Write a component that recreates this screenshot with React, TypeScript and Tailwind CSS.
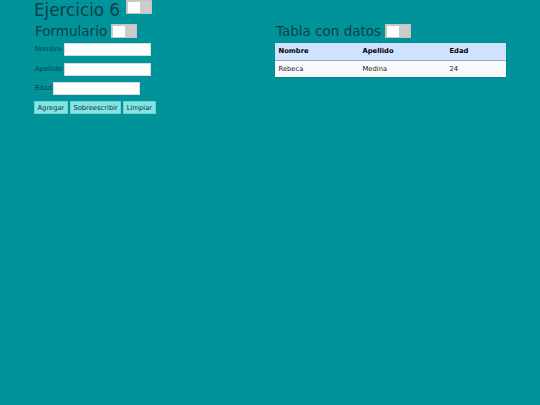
import React from "react";

function Toggle() {
  return (
    <div className="w-[26px] h-[14px] bg-[#cccccc] border border-[#c4c4c4] flex items-center pl-[1px] shrink-0">
      <div className="w-[12px] h-[11px] bg-white" />
    </div>
  );
}

export default function App() {
  const font = { fontFamily: '"DejaVu Sans", Verdana, sans-serif' };
  return (
    <div className="w-[540px] h-[405px] bg-[#01939a] text-[#0c3f48] overflow-hidden" style={font}>
      <div className="pl-[34px]">
        <div className="flex items-start h-[20px]">
          <h1 className="text-[16.75px] leading-[20px] font-normal m-0">Ejercicio 6</h1>
          <div className="ml-[6px]">
            <Toggle />
          </div>
        </div>
        <div className="flex mt-[4px]">
          <div className="w-[241px] flex flex-col">
            <div className="flex items-center h-[14px]">
              <h3 className="text-[13.5px] leading-[14px] font-normal pl-[1px]">Formulario</h3>
              <div className="ml-[4px]">
                <Toggle />
              </div>
            </div>
            <div className="flex items-center mt-[5px] h-[12.5px]">
              <label className="text-[6.75px] leading-[8px] pl-[1px]">Nombre</label>
              <input className="ml-[2px] w-[87px] h-[12.5px] bg-white border border-[#d8d8d8] outline-none" />
            </div>
            <div className="flex items-center mt-[7.5px] h-[12.5px]">
              <label className="text-[6.75px] leading-[8px] pl-[1px]">Apellido</label>
              <input className="ml-[2px] w-[87px] h-[12.5px] bg-white border border-[#d8d8d8] outline-none" />
            </div>
            <div className="flex items-center mt-[6.5px] h-[12.5px]">
              <label className="text-[6.75px] leading-[8px] pl-[1px]">Edad</label>
              <input className="ml-[1px] w-[87px] h-[12.5px] bg-white border border-[#d8d8d8] outline-none" />
            </div>
            <div className="flex items-center mt-[6.5px] gap-[2px]">
              <button className="h-[13px] px-[2.5px] bg-[#84e3e5] border border-[#6fd0d2] text-[6.75px] leading-[8px] text-[#0a3238]">Agregar</button>
              <button className="h-[13px] px-[2.5px] bg-[#84e3e5] border border-[#6fd0d2] text-[6.75px] leading-[8px] text-[#0a3238]">Sobreescribir</button>
              <button className="h-[13px] px-[2.5px] bg-[#84e3e5] border border-[#6fd0d2] text-[6.75px] leading-[8px] text-[#0a3238]">Limpiar</button>
            </div>
          </div>
          <div className="w-[231px] flex flex-col">
            <div className="flex items-center h-[14px]">
              <h3 className="text-[13.5px] leading-[14px] font-normal pl-[1px]">Tabla con datos</h3>
              <div className="ml-[4px]">
                <Toggle />
              </div>
            </div>
            <table className="mt-[5px] w-[231px] border-collapse text-[6.75px] text-[#222222] shadow-[0_0_1px_rgba(0,0,0,0.25)]">
              <thead>
                <tr className="bg-[#cfe2ff] h-[17px] border-b border-[#9aa9c0]">
                  <th className="w-[84px] text-left font-bold px-[3.5px] text-black">Nombre</th>
                  <th className="w-[87px] text-left font-bold px-[3.5px] text-black">Apellido</th>
                  <th className="text-left font-bold px-[3.5px] text-black">Edad</th>
                </tr>
              </thead>
              <tbody>
                <tr className="bg-[#f8f9fb] h-[17px]">
                  <td className="px-[3.5px]">Rebeca</td>
                  <td className="px-[3.5px]">Medina</td>
                  <td className="px-[3.5px]">24</td>
                </tr>
              </tbody>
            </table>
          </div>
        </div>
      </div>
    </div>
  );
}
